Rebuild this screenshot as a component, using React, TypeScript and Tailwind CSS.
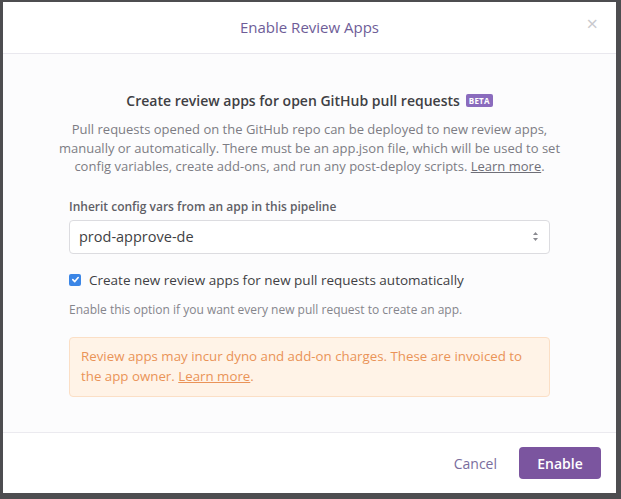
import React from "react";

const font = { fontFamily: '"Open Sans", "Liberation Sans", sans-serif' };

export default function App() {
  return (
    <div className="w-[621px] h-[499px] bg-[#4d4d50] pt-[2px] pl-[3px] pr-[5px] pb-[6px]" style={font}>
      <div className="w-full h-full bg-white flex flex-col">
        {/* header */}
        <div className="h-[52px] relative flex items-center justify-center border-b border-[#e9e8ee]">
          <span className="text-[15px] text-[#6e5d98]">Enable Review Apps</span>
          <span className="absolute right-[18px] top-[12px] text-[20px] leading-none text-[#c9c9cd]">×</span>
        </div>

        {/* body */}
        <div className="flex-1 bg-[#fcfcfd] px-[66px] pt-[36px] border-b border-[#ebeaef]">
          <div className="flex items-center justify-center gap-[6px]">
            <span className="text-[14px] font-semibold text-[#3f3f44]">Create review apps for open GitHub pull requests</span>
            <span className="bg-[#8a6bbd] text-white text-[8px] font-bold px-[3px] leading-[13px] rounded-[2px] tracking-wide">BETA</span>
          </div>
          <p className="mt-[9px] -mx-[20px] whitespace-nowrap text-center text-[13px] leading-[18.5px] text-[#7c7c84]">
            Pull requests opened on the GitHub repo can be deployed to new review apps,
            <br />
            manually or automatically. There must be an app.json file, which will be used to set
            <br />
            config variables, create add-ons, and run any post-deploy scripts.{" "}
            <a className="underline text-[#6f6f78]">Learn more</a>.
          </p>

          <div className="mt-[22px] text-[12px] font-semibold text-[#5f5f66]">Inherit config vars from an app in this pipeline</div>
          <div className="mt-[4px] h-[34px] border border-[#dcdce0] rounded-[4px] bg-white flex items-center justify-between pl-[9px] pr-[10px]">
            <span className="text-[14.5px] text-[#3f3f44]">prod-approve-de</span>
            <svg width="7" height="11" viewBox="0 0 7 11">
              <path d="M3.5 1 L6 4 H1 Z" fill="#8a8a90" />
              <path d="M3.5 10 L6 7 H1 Z" fill="#8a8a90" />
            </svg>
          </div>

          <label className="mt-[16px] flex items-center gap-[8px]">
            <span className="w-[12px] h-[12px] rounded-[2px] bg-[#3b86e6] flex items-center justify-center">
              <svg width="9" height="9" viewBox="0 0 10 10">
                <path d="M2 5.2 L4.2 7.3 L8 2.8" stroke="white" strokeWidth="1.8" fill="none" strokeLinecap="round" strokeLinejoin="round" />
              </svg>
            </span>
            <span className="text-[13.5px] text-[#3f3f44]">Create new review apps for new pull requests automatically</span>
          </label>
          <div className="mt-[11px] text-[12px] text-[#85858c]">Enable this option if you want every new pull request to create an app.</div>

          <div className="mt-[18px] h-[60px] bg-[#fff3e7] border border-[#fbdfc6] rounded-[4px] px-[11px] pt-[8px] whitespace-nowrap text-[13.3px] leading-[20px] text-[#ea9358]">
            Review apps may incur dyno and add-on charges. These are invoiced to
            <br />
            the app owner. <a className="underline">Learn more</a>.
          </div>
        </div>

        {/* footer */}
        <div className="h-[60px] flex items-center justify-end gap-[22px] pr-[15px]">
          <span className="text-[14px] text-[#7a6d9d]">Cancel</span>
          <button className="w-[82px] h-[32px] rounded-[4px] bg-[#7b559f] text-white text-[14px] font-semibold">Enable</button>
        </div>
      </div>
    </div>
  );
}
